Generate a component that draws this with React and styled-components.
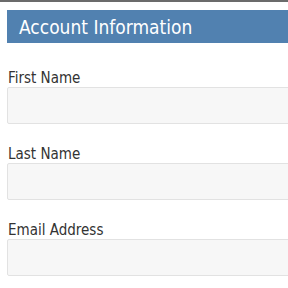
import React from 'react'
import styled, { createGlobalStyle } from 'styled-components'

const GlobalStyle = createGlobalStyle`
body {
  margin: 0;
  overflow: hidden;
  background: #fff;
  font-family: "DejaVu Sans Condensed", "DejaVu Sans", Tahoma, sans-serif;
}
`

const TopEdge = styled.div`
height: 2px;
background-color: #6b6b6b;
`

const Viewport = styled.div`
width: 288px;
overflow: hidden;
`

const Page = styled.div`
width: 340px;
padding: 8px 0 0 7px;
`

const Header = styled.div`
display: flex;
align-items: center;
height: 33px;
padding-left: 12px;
background-color: #5181b0;
color: #fff;
font-size: 19px;
`

const Form = styled.div`
display: flex;
flex-direction: column;
gap: 21px;
padding-top: 26px;
`

const Field = styled.div`
display: flex;
flex-direction: column;
`

const Label = styled.label`
padding-left: 1px;
font-size: 15px;
color: #333;
line-height: 18px;
`

const Input = styled.input`
box-sizing: border-box;
height: 37px;
width: 100%;
background-color: #f7f7f7;
border: 1px solid #e2e2e2;
border-radius: 2px;
outline: none;
`

const fields = ['First Name', 'Last Name', 'Email Address']

const App = () => {
    return (
        <>
            <GlobalStyle />
            <TopEdge />
            <Viewport>
                <Page>
                    <Header>Account Information</Header>
                    <Form>
                        {fields.map(f => (
                            <Field key={f}>
                                <Label>{f}</Label>
                                <Input />
                            </Field>
                        ))}
                    </Form>
                </Page>
            </Viewport>
        </>
    )
}

export default App
